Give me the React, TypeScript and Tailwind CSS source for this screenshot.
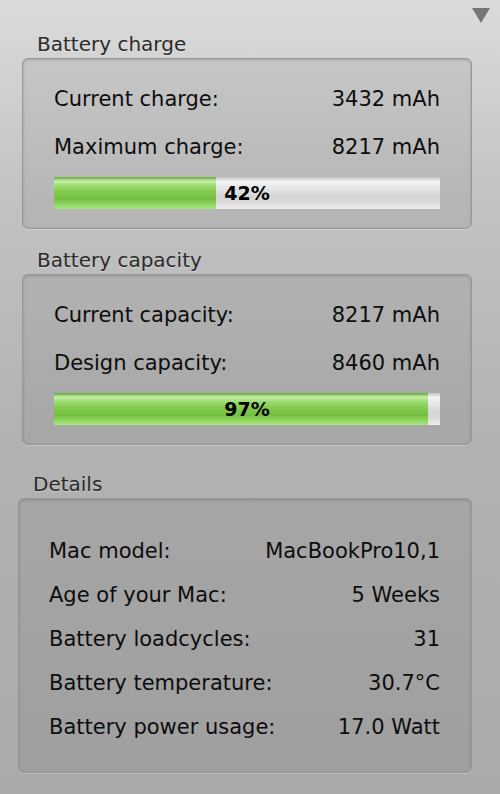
import React from "react";

const font = { fontFamily: '"DejaVu Sans", "Liberation Sans", sans-serif' };

function Row({ label, value, h }: { label: string; value: string; h: string }) {
  return (
    <div className={`flex items-center justify-between ${h}`}>
      <span>{label}</span>
      <span>{value}</span>
    </div>
  );
}

function Bar({ pct, label }: { pct: number; label: string }) {
  return (
    <div className="relative h-[32px] w-full bg-[linear-gradient(to_bottom,#c4c4c4_0%,#f3f3f3_14%,#e6e6e6_35%,#d5d5d5_62%,#dadada_80%,#ededed_100%)]">
      <div
        className="h-full bg-[linear-gradient(to_bottom,#62a835_0%,#c6eea9_13%,#9ada6e_28%,#80c84b_50%,#75bf40_70%,#90d663_86%,#a8e47f_100%)]"
        style={{ width: `${pct}%` }}
      />
      <div className="absolute inset-0 flex items-center justify-center text-[19px] font-bold text-black">
        {label}
      </div>
    </div>
  );
}

const boxCls =
  "rounded-[6px] border border-[#979797] bg-black/[0.06] shadow-[inset_0_1px_3px_rgba(0,0,0,0.18),0_1px_0_rgba(255,255,255,0.25)]";
const headCls =
  "h-[22px] leading-[22px] text-[20px] text-[#2b2b2b] [text-shadow:0_1px_0_rgba(255,255,255,0.35)]";

export default function App() {
  return (
    <div
      className="relative h-[794px] w-[500px] overflow-hidden bg-[linear-gradient(to_bottom,#dbdbdb_0%,#c2c2c2_25%,#b2b2b2_55%,#aaaaaa_100%)] text-[#0d0d0d]"
      style={font}
    >
      <svg className="absolute left-[472px] top-[8px]" width="18" height="15" viewBox="0 0 18 15">
        <polygon points="0,0 18,0 9,15" fill="#767676" />
      </svg>

      <div className="flex flex-col pt-[33px]">
        <div className={`${headCls} ml-[37px]`}>Battery charge</div>
        <div className={`${boxCls} ml-[22px] mt-[3px] h-[171px] w-[450px] px-[31px] pt-[17px] text-[21px]`}>
          <Row label="Current charge:" value="3432 mAh" h="h-[48px]" />
          <Row label="Maximum charge:" value="8217 mAh" h="h-[48px]" />
          <div className="mt-[5px]">
            <Bar pct={42} label="42%" />
          </div>
        </div>

        <div className={`${headCls} ml-[37px] mt-[20px]`}>Battery capacity</div>
        <div className={`${boxCls} ml-[22px] mt-[3px] h-[171px] w-[450px] px-[31px] pt-[17px] text-[21px]`}>
          <Row label="Current capacity:" value="8217 mAh" h="h-[48px]" />
          <Row label="Design capacity:" value="8460 mAh" h="h-[48px]" />
          <div className="mt-[5px]">
            <Bar pct={97} label="97%" />
          </div>
        </div>

        <div className={`${headCls} ml-[33px] mt-[28px]`}>Details</div>
        <div className={`${boxCls} ml-[18px] mt-[3px] h-[275px] w-[454px] pl-[30px] pr-[31px] pt-[31px] text-[21px]`}>
          <Row label="Mac model:" value="MacBookPro10,1" h="h-[44px]" />
          <Row label="Age of your Mac:" value="5 Weeks" h="h-[44px]" />
          <Row label="Battery loadcycles:" value="31" h="h-[44px]" />
          <Row label="Battery temperature:" value="30.7°C" h="h-[44px]" />
          <Row label="Battery power usage:" value="17.0 Watt" h="h-[44px]" />
        </div>
      </div>
    </div>
  );
}
